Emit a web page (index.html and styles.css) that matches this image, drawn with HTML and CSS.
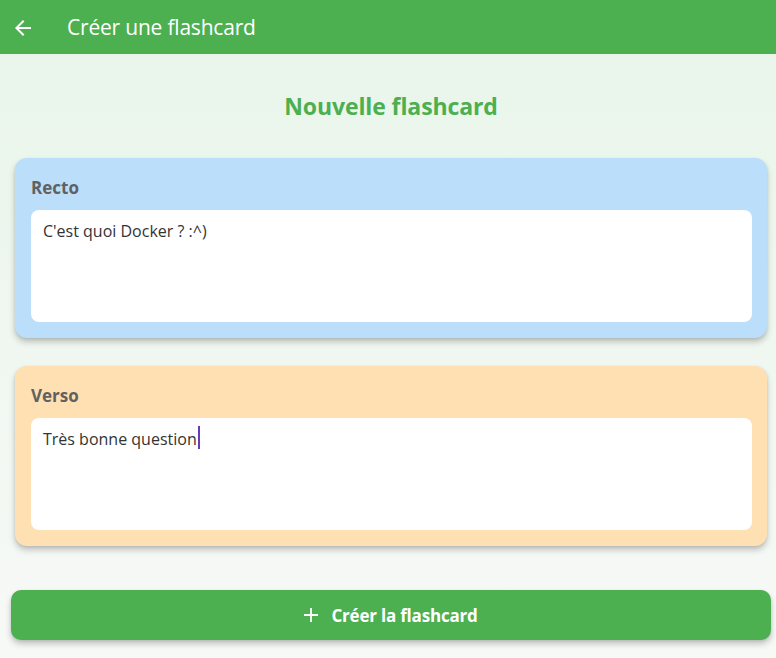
FILE: index.html
```html
<!DOCTYPE html>
<html lang="fr">
<head>
<meta charset="utf-8">
<title>Créer une flashcard</title>
<link rel="stylesheet" href="styles.css">
</head>
<body>
<header class="appbar">
  <button class="back" aria-label="Retour">
    <svg viewBox="0 0 24 24" width="24" height="24"><path d="M20 11H7.830l5.59-5.59L12 4l-8 8 8 8 1.41-1.41L7.83 13H20v-2z" fill="#fff"/></svg>
  </button>
  <h1 class="title">Créer une flashcard</h1>
</header>
<main class="page">
  <h2 class="heading">Nouvelle flashcard</h2>
  <section class="card card-recto">
    <div class="label">Recto</div>
    <div class="field"><span class="field-text">C'est quoi Docker ? :^)</span></div>
  </section>
  <section class="card card-verso">
    <div class="label">Verso</div>
    <div class="field"><span class="field-text">Très bonne question</span><span class="caret"></span></div>
  </section>
  <button class="create">
    <svg viewBox="0 0 14 14" width="14" height="14"><path d="M7 0v14M0 7h14" stroke="#fff" stroke-width="1.8"/></svg>
    <span>Créer la flashcard</span>
  </button>
</main>
</body>
</html>
```
FILE: styles.css
```css
* { box-sizing: border-box; }
html, body { margin: 0; height: 100%; }
body {
  font-family: "Open Sans", "Noto Sans", sans-serif;
  background: linear-gradient(to bottom, #e8f5e9 0%, #f7f9f7 100%);
  min-height: 658px;
}
.appbar {
  height: 54px;
  background: #4caf50;
  display: flex;
  align-items: center;
  padding-left: 11px;
}
.back {
  border: 0;
  background: none;
  padding: 0;
  width: 24px;
  height: 24px;
  display: flex;
  margin-top: 2px;
}
.title {
  margin: 0 0 0 32px;
  font-weight: 400;
  font-size: 21px;
  color: #fff;
  letter-spacing: -0.2px;
}
.page {
  display: flex;
  flex-direction: column;
  padding: 0 9px 0 15px;
}
.heading {
  margin: 37px 0 0 0;
  height: 30px;
  line-height: 30px;
  text-align: center;
  font-size: 23px;
  font-weight: 700;
  color: #4caf50;
  letter-spacing: -0.1px;
}
.card {
  border-radius: 12px;
  padding: 16px 15px 16px 16px;
  box-shadow: 0 4px 6px rgba(0,0,0,0.22), 0 1px 3px rgba(0,0,0,0.08);
}
.card-recto { background: #bbdefb; margin-top: 37px; }
.card-verso { background: #ffe0b2; margin-top: 28px; }
.label {
  font-size: 17px;
  font-weight: 700;
  color: #616161;
  height: 20px;
  line-height: 20px;
  margin-top: 4px;
}
.field {
  margin-top: 12px;
  height: 112px;
  background: #fff;
  border-radius: 8px;
  padding: 10px 12px;
  display: flex;
  align-items: flex-start;
}
.field-text {
  font-size: 16px;
  color: #333;
  line-height: 22px;
}
.caret {
  display: inline-block;
  width: 2px;
  height: 23px;
  background: #673ab7;
  margin-top: -2px;
  margin-left: 1px;
}
.create {
  margin: 44px -4px 0 -4px;
  height: 50px;
  background: #4caf50;
  border: 0;
  border-radius: 10px;
  color: #fff;
  font-family: inherit;
  font-size: 17px;
  font-weight: 700;
  display: flex;
  align-items: center;
  justify-content: center;
  gap: 13px;
  box-shadow: 0 4px 6px rgba(0,0,0,0.22), 0 1px 3px rgba(0,0,0,0.08);
  letter-spacing: -0.2px;
}
```
